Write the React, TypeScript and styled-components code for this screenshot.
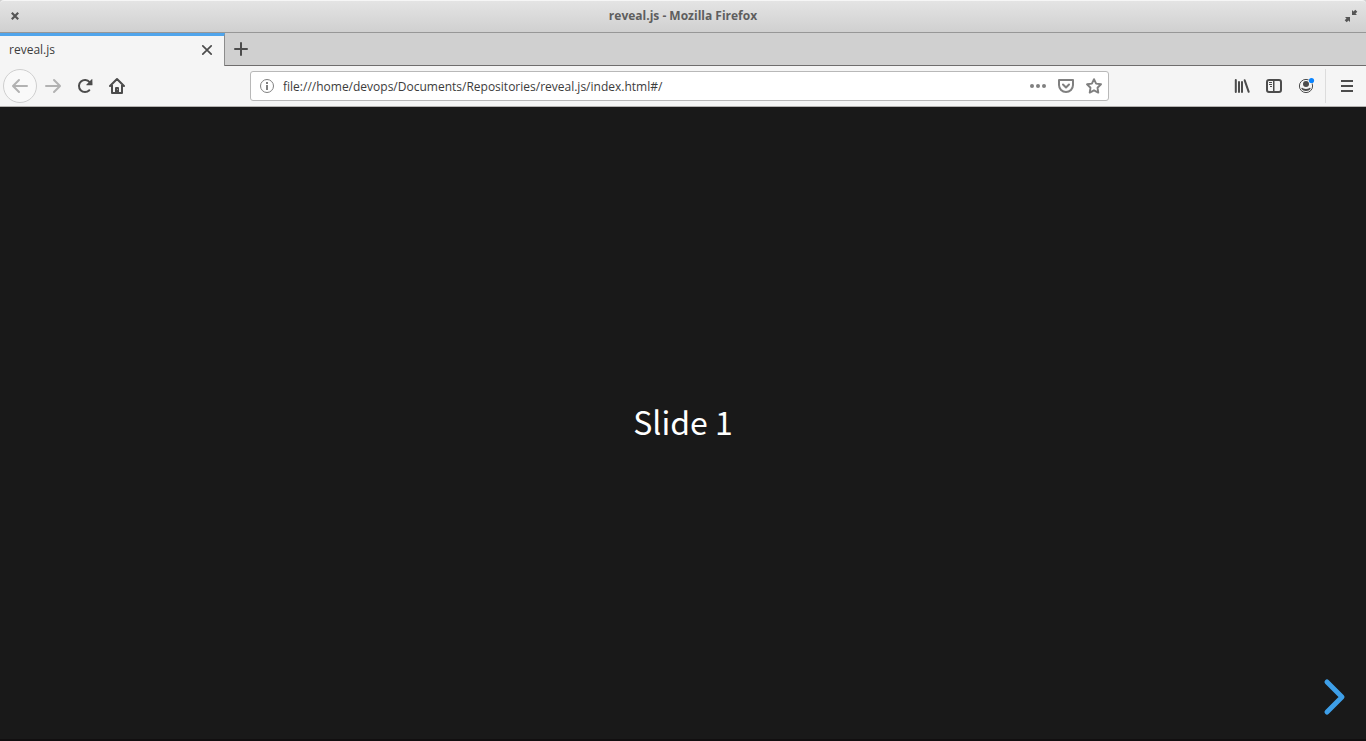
import React from 'react';
import styled, { createGlobalStyle } from 'styled-components';

const Global = createGlobalStyle`
  *, *::before, *::after { box-sizing: border-box; }
  body { margin: 0; background: #191919; }
  button { font: inherit; color: inherit; background: none; border: 0; padding: 0; }
`;

const Window = styled.div`
  min-height: 100vh;
  display: flex;
  flex-direction: column;
  background: #d0d0d0;
  font-family: "Open Sans", "Noto Sans", sans-serif;
  font-size: 12px;
  line-height: 16px;
  color: #3c3c3c;
`;

const TitleBar = styled.header`
  display: flex;
  align-items: center;
  height: 33px;
  padding-bottom: 2px;
  border-top: 1px solid #f6f6f6;
  border-bottom: 1px solid #979797;
  border-radius: 4px 4px 0 0;
  background: linear-gradient(#e4e4e4, #d0d0d0);
`;

const WindowTitle = styled.h1`
  flex: 1;
  margin: 0;
  font-size: 12px;
  line-height: 16px;
  font-weight: 700;
  text-align: center;
  color: #5e5e5e;
`;

const WindowButton = styled.button`
  display: grid;
  place-items: center;
  width: 30px;
  height: 28px;
  color: #555;
`;

const TabStrip = styled.nav`
  display: flex;
  height: 33px;
  background: #d0d0d0;
  box-shadow: inset 0 -1px #6f6d6d;
`;

const Tab = styled.div`
  display: flex;
  align-items: center;
  width: 225px;
  padding: 0 7px 2px 9px;
  border-top: 3px solid #50a5ec;
  border-right: 1px solid #8c8c8c;
  background: #f5f5f5;
`;

const TabLabel = styled.span`
  flex: 1;
`;

const TabButton = styled.button`
  display: grid;
  place-items: center;
  width: 20px;
  height: 24px;
  color: #4c4c4c;
`;

const NewTabButton = styled(TabButton)`
  width: 32px;
  height: 32px;
`;

const Toolbar = styled.div`
  display: flex;
  align-items: center;
  height: 41px;
  padding: 0 3px;
  border-bottom: 1px solid #b4b2b0;
  background: #f5f5f5;
`;

const ToolButton = styled.button<{ $faded?: boolean }>`
  display: grid;
  place-items: center;
  flex: none;
  width: 32px;
  height: 32px;
  color: ${(p) => (p.$faded ? '#b2b2b2' : '#4c4c4c')};
`;

const BackButton = styled(ToolButton)`
  width: 34px;
  height: 34px;
  border: 1px solid #cfcfcf;
  border-radius: 50%;
  background: #f9f9f9;
`;

const Spring = styled.div`
  flex: 117 1 0;
`;

const Divider = styled.div`
  width: 1px;
  height: 34px;
  margin: 0 5px 0 3px;
  background: #dcdcdc;
`;

const AddressBar = styled.div`
  flex: 849 1 0;
  display: flex;
  align-items: center;
  height: 30px;
  padding: 0 0 0 8px;
  border: 1px solid #b8b8b8;
  border-radius: 3px;
  background: #fff;
`;

const AddressInput = styled.input`
  flex: 1;
  min-width: 0;
  height: 24px;
  margin-left: 8px;
  padding: 0;
  border: 0;
  outline: 0;
  background: none;
  font: inherit;
  color: #3c3c3c;
`;

const AddressButton = styled.button<{ $narrow?: boolean }>`
  display: grid;
  place-items: center;
  flex: none;
  width: ${(p) => (p.$narrow ? '16px' : '28px')};
  height: 28px;
  color: #808080;
`;

const Deck = styled.main`
  position: relative;
  flex: 1;
  display: grid;
  place-items: center;
  padding-bottom: 4px;
  border-bottom: 2px solid #110f10;
  background: #191919;
`;

const SlideText = styled.p`
  margin: 0;
  font-family: "Noto Sans CJK SC", sans-serif;
  font-size: 32px;
  line-height: 44px;
  color: #fff;
`;

const NextButton = styled.button`
  position: absolute;
  right: 20px;
  bottom: 22px;
  width: 24px;
  height: 40px;
  color: #3e9fe8;
`;

const Icon = styled.svg`
  display: block;
  fill: currentColor;
`;

function Glyph({ children }: { children: React.ReactNode }) {
  return (
    <Icon width="16" height="16" viewBox="0 0 16 16" overflow="visible" aria-hidden="true">
      {children}
    </Icon>
  );
}

const line = { fill: 'none', stroke: 'currentColor' } as const;

export default function App() {
  return (
    <Window>
      <Global />
      <TitleBar>
        <WindowButton aria-label="Close window">
          <Glyph><path {...line} strokeWidth="2.2" d="M4.8 4.8l6.4 6.4M11.2 4.8l-6.4 6.4" /></Glyph>
        </WindowButton>
        <WindowTitle>reveal.js - Mozilla Firefox</WindowTitle>
        <WindowButton aria-label="Restore window">
          <Glyph>
            <path d="M9 2v5h5l-1.500-1.500L14.300 3.700 12.300 1.700 10.500 3.500zM7 14V9H2l1.500 1.500L1.700 12.300 3.700 14.300 5.500 12.500z" />
          </Glyph>
        </WindowButton>
      </TitleBar>
      <TabStrip aria-label="Tabs">
        <Tab>
          <TabLabel>reveal.js</TabLabel>
          <TabButton aria-label="Close tab">
            <Glyph><path {...line} strokeWidth="1.7" strokeLinecap="round" d="M3.800 3.800l8.400 8.400M12.200 3.800l-8.400 8.400" /></Glyph>
          </TabButton>
        </Tab>
        <NewTabButton aria-label="New tab">
          <Glyph><path d="M14 7H9V2a1 1 0 0 0-2 0v5H2a1 1 0 0 0 0 2h5v5a1 1 0 0 0 2 0V9h5a1 1 0 0 0 0-2z" /></Glyph>
        </NewTabButton>
      </TabStrip>
      <Toolbar>
        <BackButton $faded aria-label="Back">
          <Glyph><path d="M15 7H3.414l4.293-4.293a1 1 0 0 0-1.414-1.414l-6 6a1 1 0 0 0 0 1.414l6 6a1 1 0 0 0 1.414-1.414L3.414 9H15a1 1 0 0 0 0-2z" /></Glyph>
        </BackButton>
        <ToolButton $faded aria-label="Forward">
          <Glyph><path d="M1 7h11.586L8.293 2.707a1 1 0 0 1 1.414-1.414l6 6a1 1 0 0 1 0 1.414l-6 6a1 1 0 0 1-1.414-1.414L12.586 9H1a1 1 0 0 1 0-2z" /></Glyph>
        </ToolButton>
        <ToolButton aria-label="Reload">
          <Glyph>
            <path {...line} strokeWidth="2" strokeLinecap="round" d="M12.300 12.200A6 6 0 1 1 12.600 4.200" />
            <path d="M15.300 1.100a.6.6 0 0 0-.6.2L9.500 6.400a.5.5 0 0 0 .4.900h5a.6.6 0 0 0 .6-.6z" />
          </Glyph>
        </ToolButton>
        <ToolButton aria-label="Home">
          <Glyph>
            <path {...line} strokeWidth="2" strokeLinecap="round" strokeLinejoin="round" d="M1 8l7-7 7 7M3 7v8h10V7" />
            <path d="M6 15v-5a1 1 0 0 1 1-1h2a1 1 0 0 1 1 1v5z" />
            <circle cx="8.500" cy="11.500" r=".5" fill="#b0b0b0" />
          </Glyph>
        </ToolButton>
        <Spring />
        <AddressBar>
          <AddressButton $narrow aria-label="Site information">
            <Glyph>
              <circle cx="8" cy="8" r="6.500" {...line} strokeWidth="1" />
              <path d="M7 7h2v5H7zM7 4h2v2H7z" />
            </Glyph>
          </AddressButton>
          <AddressInput aria-label="Address" defaultValue="file:///home/devops/Documents/Repositories/reveal.js/index.html#/" spellCheck={false} />
          <AddressButton aria-label="Page actions">
            <Glyph>
              <circle cx="2" cy="8" r="2" /><circle cx="8" cy="8" r="2" /><circle cx="14" cy="8" r="2" />
            </Glyph>
          </AddressButton>
          <AddressButton aria-label="Save to Pocket">
            <Glyph>
              <path {...line} strokeWidth="2" strokeLinejoin="round" d="M1 2h14v5a7 7 0 0 1-14 0z" />
              <path {...line} strokeWidth="2" strokeLinecap="round" strokeLinejoin="round" d="M5 6.500l3 3 3-3" />
            </Glyph>
          </AddressButton>
          <AddressButton aria-label="Bookmark this page">
            <Glyph>
              <path {...line} strokeWidth="1.900" strokeLinejoin="round" d="M8 1.200l2.100 4.400 4.900.7-3.500 3.400.8 4.900L8 12.300l-4.300 2.300.8-4.900L1 6.300l4.900-.7z" />
            </Glyph>
          </AddressButton>
        </AddressBar>
        <Spring />
        <ToolButton aria-label="Library">
          <Glyph>
            <path {...line} strokeWidth="2" strokeLinecap="round" d="M1.800 2v12M5 4v10M8 4v10M10.700 2.300l4 11.500" />
          </Glyph>
        </ToolButton>
        <ToolButton aria-label="Sidebars">
          <Glyph>
            <rect x="1" y="2" width="14" height="12" rx="2" {...line} strokeWidth="2" />
            <path d="M7 2h1.500v12H7zM3 4h3v1H3zM3 6h3v1H3zM4 8h2v1H4z" />
          </Glyph>
        </ToolButton>
        <ToolButton aria-label="Account">
          <Glyph>
            <circle cx="8" cy="8" r="6.600" {...line} strokeWidth="1" />
            <circle cx="8" cy="6" r="3" />
            <path d="M3.900 9.700c1-.1 1.800 1.300 4.100 1.300s3.100-1.400 4.100-1.300c.6.1.6.8.3 1.300-.8 1.300-2.400 2-4.400 2s-3.600-.7-4.400-2c-.3-.5-.3-1.200.3-1.300z" />
            <circle cx="13.500" cy="2.500" r="3" fill="#f5f5f5" />
            <circle cx="13.500" cy="2.500" r="2.600" fill="#0a84ff" />
          </Glyph>
        </ToolButton>
        <Divider />
        <ToolButton aria-label="Open menu">
          <Glyph><path d="M2 2h12v2H2zM2 7h12v2H2zM2 12h12v2H2z" /></Glyph>
        </ToolButton>
      </Toolbar>
      <Deck>
        <SlideText>Slide 1</SlideText>
        <NextButton aria-label="Next slide">
          <Icon width="24" height="40" viewBox="0 0 24 40" aria-hidden="true">
            <path {...line} strokeWidth="5" strokeLinecap="round" strokeLinejoin="round" d="M5 5l15 15L5 35" />
          </Icon>
        </NextButton>
      </Deck>
    </Window>
  );
}
